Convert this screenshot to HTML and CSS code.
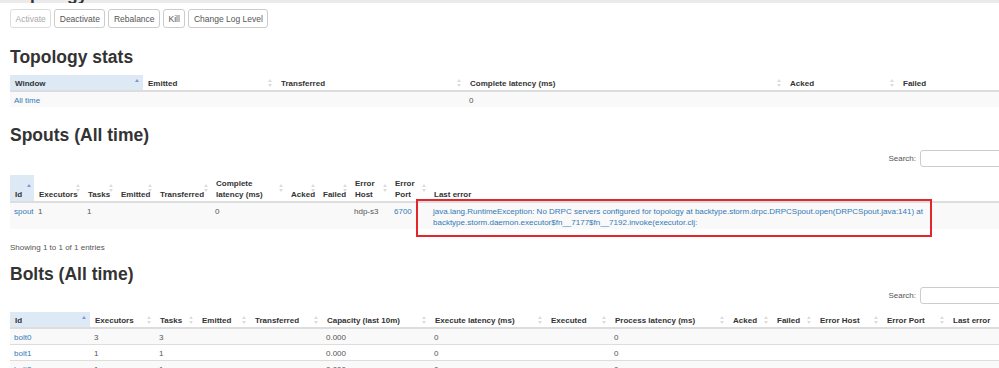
FILE: index.html
```html
<!DOCTYPE html>
<html>
<head>
  <title>Topology</title>
  <link rel="stylesheet" href="styles.css">
</head>
<body>
  <div class="cut">
    <h2 class="cut-title">Topology actions</h2>
  </div>
  <div class="wrap">
    <div class="actions">
      <button class="btn" disabled>Activate</button>
      <button class="btn">Deactivate</button>
      <button class="btn">Rebalance</button>
      <button class="btn">Kill</button>
      <button class="btn">Change Log Level</button>
    </div>

    <h2 class="title first">Topology stats</h2>
    <table class="grid stats">
      <colgroup>
        <col style="width:133px"><col style="width:133px"><col style="width:189px">
        <col style="width:320px"><col style="width:113px"><col>
      </colgroup>
      <thead>
        <tr>
          <th class="sort asc">Window</th>
          <th class="sort">Emitted</th>
          <th class="sort">Transferred</th>
          <th class="sort">Complete latency (ms)</th>
          <th class="sort">Acked</th>
          <th class="sort">Failed</th>
        </tr>
      </thead>
      <tbody>
        <tr><td><a href="#">All time</a></td><td></td><td></td><td>0</td><td></td><td></td></tr>
      </tbody>
    </table>

    <h2 class="title">Spouts (All time)</h2>
    <div class="search">
      <label>Search:</label>
      <input type="text">
    </div>
    <table class="grid spouts">
      <colgroup>
        <col style="width:24px"><col style="width:49px"><col style="width:33px"><col style="width:39px">
        <col style="width:56px"><col style="width:75px"><col style="width:32px"><col style="width:32px">
        <col style="width:40px"><col style="width:39px"><col>
      </colgroup>
      <thead>
        <tr>
          <th class="sort asc">Id</th>
          <th class="sort">Executors</th>
          <th class="sort">Tasks</th>
          <th class="sort">Emitted</th>
          <th class="sort">Transferred</th>
          <th class="sort">Complete latency (ms)</th>
          <th class="sort">Acked</th>
          <th class="sort">Failed</th>
          <th class="sort">Error Host</th>
          <th class="sort">Error Port</th>
          <th>Last error</th>
        </tr>
      </thead>
      <tbody>
        <tr>
          <td><a href="#">spout</a></td>
          <td>1</td>
          <td>1</td>
          <td></td>
          <td></td>
          <td>0</td>
          <td></td>
          <td></td>
          <td>hdp-s3</td>
          <td><a href="#">6700</a></td>
          <td class="err">
            <a href="#">java.lang.RuntimeException: No DRPC servers configured for topology at backtype.storm.drpc.DRPCSpout.open(DRPCSpout.java:141) at backtype.storm.daemon.executor$fn__7177$fn__7192.invoke(executor.clj:</a>
            <span class="mark"></span>
          </td>
        </tr>
      </tbody>
    </table>
    <div class="info">Showing 1 to 1 of 1 entries</div>

    <h2 class="title bolts-title">Bolts (All time)</h2>
    <div class="search tight">
      <label>Search:</label>
      <input type="text">
    </div>
    <table class="grid bolts">
      <colgroup>
        <col style="width:80px"><col style="width:65px"><col style="width:42px"><col style="width:53px">
        <col style="width:72px"><col style="width:108px"><col style="width:116px"><col style="width:64px">
        <col style="width:118px"><col style="width:44px"><col style="width:43px"><col style="width:67px">
        <col style="width:66px"><col>
      </colgroup>
      <thead>
        <tr>
          <th class="sort asc">Id</th>
          <th class="sort">Executors</th>
          <th class="sort">Tasks</th>
          <th class="sort">Emitted</th>
          <th class="sort">Transferred</th>
          <th class="sort">Capacity (last 10m)</th>
          <th class="sort">Execute latency (ms)</th>
          <th class="sort">Executed</th>
          <th class="sort">Process latency (ms)</th>
          <th class="sort">Acked</th>
          <th class="sort">Failed</th>
          <th class="sort">Error Host</th>
          <th class="sort">Error Port</th>
          <th class="sort">Last error</th>
        </tr>
      </thead>
      <tbody>
        <tr><td><a href="#">bolt0</a></td><td>3</td><td>3</td><td></td><td></td><td>0.000</td><td>0</td><td></td><td>0</td><td></td><td></td><td></td><td></td><td></td></tr>
        <tr><td><a href="#">bolt1</a></td><td>1</td><td>1</td><td></td><td></td><td>0.000</td><td>0</td><td></td><td>0</td><td></td><td></td><td></td><td></td><td></td></tr>
        <tr><td><a href="#">bolt2</a></td><td>1</td><td>1</td><td></td><td></td><td>0.000</td><td>0</td><td></td><td>0</td><td></td><td></td><td></td><td></td><td></td></tr>
        <tr><td><a href="#">bolt3</a></td><td>1</td><td>1</td><td></td><td></td><td>0.000</td><td>0</td><td></td><td>0</td><td></td><td></td><td></td><td></td><td></td></tr>
      </tbody>
    </table>
  </div>
</body>
</html>
```

FILE: styles.css
```css
html, body {
  margin: 0;
  overflow: hidden;
  background-color: #fff;
  font-family: "Liberation Sans", Arial, sans-serif;
  color: #333;
}
.cut {
  height: 3px;
  overflow: hidden;
  background-color: #ebebeb;
  padding-left: 10px;
}
.cut-title {
  margin: -16px 0 0;
  font-size: 17.5px;
  line-height: 20px;
  font-weight: bold;
  color: #333;
}
.wrap {
  width: 1070px;
  padding: 0 10px;
}
.actions {
  display: flex;
  gap: 3px;
  margin-top: 6px;
}
.btn {
  height: 19px;
  padding: 0 4.5px;
  font-family: "Liberation Sans", Arial, sans-serif;
  font-size: 8.5px;
  color: #555;
  background-color: #fff;
  border: 1px solid #ccc;
  border-radius: 3px;
}
.btn:disabled {
  color: #aaa;
  border-color: #ddd;
}
.title {
  margin: 18px 0 0;
  font-size: 17.5px;
  line-height: 20px;
  font-weight: bold;
  color: #333;
}
.title.first {
  margin-top: 19px;
}
.title.bolts-title {
  margin-top: 11px;
}
.grid {
  table-layout: fixed;
  width: 100%;
  border-collapse: collapse;
  margin-top: 8px;
  font-size: 8px;
}
.grid th {
  position: relative;
  text-align: left;
  vertical-align: bottom;
  font-weight: bold;
  color: #333;
  line-height: 11px;
  padding: 3px 5px 1px;
  border-bottom: 2px solid #ddd;
}
.grid td {
  vertical-align: top;
  color: #555;
  line-height: 11px;
  padding: 3px 4px 1px;
  border-top: 1px solid #ddd;
  background-color: #f9f9f9;
}
.grid tbody tr:nth-child(even) td {
  background-color: #fff;
}
.grid a {
  color: #337ab7;
  text-decoration: none;
}
.sort::before,
.sort::after {
  content: "";
  position: absolute;
  right: 4px;
  top: 50%;
  border-left: 2.5px solid transparent;
  border-right: 2.5px solid transparent;
}
.sort::before {
  margin-top: -4px;
  border-bottom: 3px solid #dcdcdc;
}
.sort::after {
  margin-top: 1px;
  border-top: 3px solid #dcdcdc;
}
.grid th.asc {
  background-color: #dde9f4;
}
.sort.asc::before {
  border-bottom-color: #8594d6;
}
.sort.asc::after {
  display: none;
}
.spouts th.sort::before,
.spouts th.sort::after {
  right: 3px;
}
.search {
  display: flex;
  justify-content: flex-end;
  align-items: center;
  gap: 4px;
  margin-top: 5px;
  font-size: 8px;
  color: #555;
}
.search.tight {
  margin-top: 3px;
}
.search input {
  width: 160px;
  height: 17px;
  box-sizing: border-box;
  border: 1px solid #ccc;
  border-radius: 3px;
}
.bolts {
  margin-top: 8px;
}
.err {
  position: relative;
}
.mark {
  position: absolute;
  left: -13px;
  top: -4px;
  width: 516px;
  height: 38px;
  box-sizing: border-box;
  border: 2px solid #e3262b;
}
.info {
  margin-top: 13px;
  font-size: 8px;
  line-height: 11px;
  color: #555;
}
```
